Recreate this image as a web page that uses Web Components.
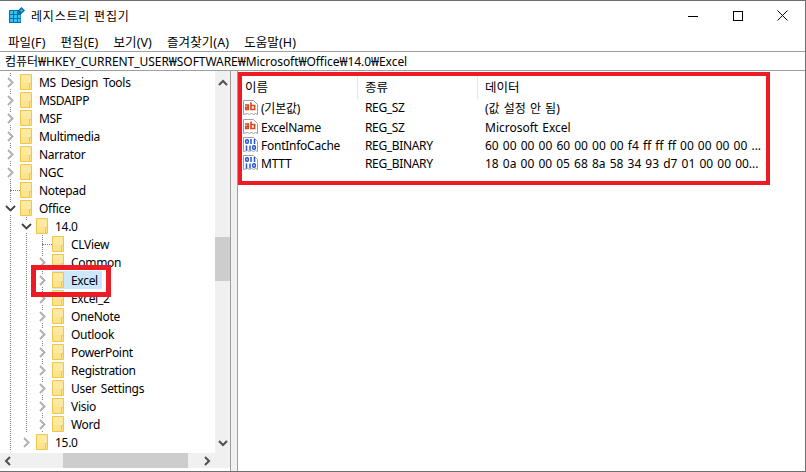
<!DOCTYPE html>
<html>
<head>
<meta charset="utf-8">
<style>
  html, body { margin: 0; padding: 0; background: #fff; }
  body { font-family: "Noto Sans", "Noto Sans CJK KR", sans-serif; font-size: 12px; color: #000; }
</style>
</head>
<body>
<reg-window>
  <reg-titlebar slot="title">레지스트리 편집기</reg-titlebar>
  <reg-menu slot="menu"></reg-menu>
  <reg-address slot="address">컴퓨터₩HKEY_CURRENT_USER₩SOFTWARE₩Microsoft₩Office₩14.0₩Excel</reg-address>
  <reg-tree slot="tree">
    <tree-row level="0" arrow="right" guides="10">MS Design Tools</tree-row>
    <tree-row level="0" arrow="right" guides="10">MSDAIPP</tree-row>
    <tree-row level="0" arrow="right" guides="10">MSF</tree-row>
    <tree-row level="0" arrow="right" guides="10">Multimedia</tree-row>
    <tree-row level="0" arrow="right" guides="10">Narrator</tree-row>
    <tree-row level="0" arrow="right" guides="10">NGC</tree-row>
    <tree-row level="0" arrow="dots" guides="10">Notepad</tree-row>
    <tree-row level="0" arrow="down" guides="10">Office</tree-row>
    <tree-row level="1" arrow="down" guides="10,26">14.0</tree-row>
    <tree-row level="2" arrow="dots" guides="10,26,42">CLView</tree-row>
    <tree-row level="2" arrow="right" guides="10,26,42">Common</tree-row>
    <tree-row level="2" arrow="right" guides="10,26,42" selected>Excel</tree-row>
    <tree-row level="2" arrow="right" guides="10,26,42">Excel_2</tree-row>
    <tree-row level="2" arrow="right" guides="10,26,42">OneNote</tree-row>
    <tree-row level="2" arrow="right" guides="10,26,42">Outlook</tree-row>
    <tree-row level="2" arrow="right" guides="10,26,42">PowerPoint</tree-row>
    <tree-row level="2" arrow="right" guides="10,26,42">Registration</tree-row>
    <tree-row level="2" arrow="right" guides="10,26,42">User Settings</tree-row>
    <tree-row level="2" arrow="right" guides="10,26,42">Visio</tree-row>
    <tree-row level="2" arrow="right" guides="10,26,42">Word</tree-row>
    <tree-row level="1" arrow="right" guides="10">15.0</tree-row>
  </reg-tree>
  <reg-list slot="list">
    <list-row kind="sz" name="(기본값)" type="REG_SZ" data="(값 설정 안 됨)"></list-row>
    <list-row kind="sz" name="ExcelName" type="REG_SZ" data="Microsoft Excel"></list-row>
    <list-row kind="bin" name="FontInfoCache" type="REG_BINARY" data="60 00 00 00 60 00 00 00 f4 ff ff ff 00 00 00 00 ..."></list-row>
    <list-row kind="bin" name="MTTT" type="REG_BINARY" data="18 0a 00 00 05 68 8a 58 34 93 d7 01 00 00 00..."></list-row>
  </reg-list>
</reg-window>

<script>
// Small helper, every element just stamps its markup into an open shadow root
class ShadowEl extends HTMLElement {
  constructor() {
    super();
    this.attachShadow({ mode: 'open' });
  }
}

class RegWindow extends ShadowEl {
  connectedCallback() {
    this.shadowRoot.innerHTML = `
      <style>
        :host {
          display: flex;
          flex-direction: column;
          position: relative;
          width: 806px;
          height: 472px;
          box-sizing: border-box;
          border: 1px solid #707070;
          border-left: 0;
          background: #fff;
          overflow: hidden;
        }
        .main { flex: 1; display: flex; min-height: 0; }
        .mark { position: absolute; border: 4px solid #ed1c24; box-sizing: border-box; pointer-events: none; }
        .mark.list { left: 238px; top: 71px; width: 532px; height: 113px; }
        .mark.key { left: 31px; top: 264px; width: 80px; height: 32px; border-width: 5px; }
      </style>
      <slot name="title"></slot>
      <slot name="menu"></slot>
      <slot name="address"></slot>
      <div class="main">
        <slot name="tree"></slot>
        <slot name="list"></slot>
      </div>
      <div class="mark list"></div>
      <div class="mark key"></div>
    `;
  }
}

class RegTitlebar extends ShadowEl {
  connectedCallback() {
    this.shadowRoot.innerHTML = `
      <style>
        :host { display: flex; align-items: center; height: 30px; padding-left: 9px; font-size: 12px; }
        svg { display: block; }
        .icon { margin-top: -2px; }
        .text { margin-left: 6px; flex: 1; letter-spacing: 0.8px; margin-top: -1px; }
        .btn { width: 45px; height: 30px; display: flex; align-items: center; justify-content: center; margin-top: -1px; }
      </style>
      <svg class="icon" width="16" height="16" viewBox="0 0 16 16">
        <path fill="#0b6fa8" d="M0 3h12v13H0z"/>
        <path fill="#35c2f5" d="M1 4h3v3H1zM5 4h3v3H5zM1 8h3v3H1zM5 8h3v3H5zM9 8h2.500v3H9zM1 12h3v3H1zM5 12h3v3H5zM9 12h2.500v3H9z"/>
        <path fill="#0b6fa8" d="M12.500 0l3.500 3.500-3.500 3.500L9 3.500z"/>
        <path fill="#35c2f5" d="M12.500 2l1.500 1.500-1.500 1.500L11 3.500z"/>
      </svg>
      <span class="text"><slot></slot></span>
      <span class="btn"><svg width="10" height="10"><path d="M0 5.500h10" stroke="#000"/></svg></span>
      <span class="btn"><svg width="10" height="10"><rect x=".5" y=".5" width="9" height="9" fill="none" stroke="#000"/></svg></span>
      <span class="btn"><svg width="11" height="11"><path d="M.5.500l10 10M10.500.500l-10 10" stroke="#000" stroke-width="1"/></svg></span>
    `;
  }
}

class RegMenu extends ShadowEl {
  connectedCallback() {
    const items = ['파일(F)', '편집(E)', '보기(V)', '즐겨찾기(A)', '도움말(H)'];
    this.shadowRoot.innerHTML = `
      <style>
        :host { display: flex; height: 20px; align-items: center; padding-left: 8px; gap: 15px; font-size: 12.500px; letter-spacing: 0.1px; }
      </style>
      ${items.map(t => `<span>${t}</span>`).join('')}
    `;
  }
}

class RegAddress extends ShadowEl {
  connectedCallback() {
    this.shadowRoot.innerHTML = `
      <style>
        :host {
          display: flex;
          align-items: center;
          height: 20px;
          box-sizing: border-box;
          border: 1px solid #a0a0a0;
          border-left: 0;
          border-right: 0;
          padding-left: 5px;
          font-size: 12px;
          letter-spacing: -0.05px;
          white-space: nowrap;
        }
      </style>
      <slot></slot>
    `;
  }
}

class RegTree extends ShadowEl {
  connectedCallback() {
    this.shadowRoot.innerHTML = `
      <style>
        :host {
          display: flex;
          width: 238px;
          flex: none;
          height: 100%;
          box-sizing: border-box;
          border-right: 1px solid #a0a0a0;
          background: #fff;
        }
        .pane {
          width: 230px;
          flex: none;
          display: grid;
          grid-template-columns: 215px 15px;
          grid-template-rows: 1fr 15px;
          padding-bottom: 3px;
          box-sizing: border-box;
          background: #fff;
        }
        .split { flex: 1; background: #f0f0f0; border-left: 1px solid #a0a0a0; }
        .rows { background: #fff; overflow: hidden; padding-top: 2px; }
        svg { display: block; }
        .vbar, .hbar, .corner { background: #f0f0f0; }
        .vbar { display: flex; flex-direction: column; align-items: center; padding: 3px 0 1px; }
        .thumb-v { margin-top: 146px; margin-bottom: auto; width: 15px; height: 44px; background: #cdcdcd; flex: none; }
        .hbar { display: flex; align-items: center; }
        .thumb-h { width: 125px; height: 15px; background: #cdcdcd; margin-left: 48px; margin-right: auto; }
        .up, .down { height: 17px; display: flex; align-items: center; flex: none; }
        .end { width: 15px; display: flex; justify-content: center; flex: none; }
      </style>
      <div class="pane">
        <div class="rows"><slot></slot></div>
        <div class="vbar">
          <span class="up"><svg width="10" height="7"><path d="M1 6l4-4 4 4" fill="none" stroke="#505050" stroke-width="2"/></svg></span>
          <div class="thumb-v"></div>
          <span class="down"><svg width="10" height="7"><path d="M1 1l4 4 4-4" fill="none" stroke="#505050" stroke-width="2"/></svg></span>
        </div>
        <div class="hbar">
          <span class="end"><svg width="7" height="10"><path d="M6 1L2 5l4 4" fill="none" stroke="#505050" stroke-width="2"/></svg></span>
          <div class="thumb-h"></div>
          <span class="end"><svg width="7" height="10"><path d="M1 1l4 4-4 4" fill="none" stroke="#505050" stroke-width="2"/></svg></span>
        </div>
        <div class="corner"></div>
      </div>
      <div class="split"></div>
    `;
  }
}

class TreeRow extends ShadowEl {
  connectedCallback() {
    const level = parseInt(this.getAttribute('level'), 10);
    const arrow = this.getAttribute('arrow');
    const guides = (this.getAttribute('guides') || '').split(',').filter(Boolean);
    const dots = 'repeating-linear-gradient(#808080 0 1px, transparent 1px 2px)';
    const bg = guides.map(x => `${dots} ${x}px 0 / 1px 100% no-repeat`).join(',');
    const arrows = {
      right: '<svg width="7" height="11"><path d="M1 1l4.500 4.500L1 10" fill="none" stroke="#b0b0b0" stroke-width="2"/></svg>',
      down: '<svg width="11" height="7"><path d="M1 1l4.500 4.500L10 1" fill="none" stroke="#404040" stroke-width="1.800"/></svg>'
    };
    this.shadowRoot.innerHTML = `
      <style>
        :host { display: block; height: 18px; background: ${bg}; letter-spacing: -0.3px; word-spacing: 2px; }
        .row { display: flex; align-items: center; height: 18px; padding-left: ${level * 16}px; white-space: nowrap; }
        .arrow { width: 20px; height: 18px; flex: none; display: flex; align-items: center; justify-content: center; }
        .arrow.solid { background: #fff; background-clip: content-box; padding: 3px 4px; box-sizing: border-box; }
        .dots { width: 10px; margin-left: 10px; border-top: 1px dotted #808080; }
        .item { display: flex; align-items: center; height: 18px; }
        .sel { background: #cce8ff; }
        svg { display: block; flex: none; }
        .label { margin-left: 7px; padding-right: 4px; }
      </style>
      <div class="row">
        <span class="arrow ${arrow === 'dots' ? '' : 'solid'}">${arrow === 'dots' ? '<span class="dots"></span>' : arrows[arrow]}</span>
        <span class="item ${this.hasAttribute('selected') ? 'sel' : ''}">
          <svg width="12" height="16" viewBox="0 0 12 16">
            <path d="M.5.500h11v15H.5z" fill="#fde48c" stroke="#eec64e"/>
            <path d="M1 1h10v8H1z" fill="#fff0bd" opacity=".45"/>
            <path d="M9.500 15.500v-6h2" fill="none" stroke="#eec64e"/>
          </svg>
          <span class="label"><slot></slot></span>
        </span>
      </div>
    `;
  }
}

class RegList extends ShadowEl {
  connectedCallback() {
    this.shadowRoot.innerHTML = `
      <style>
        :host { display: block; flex: 1; min-width: 0; background: #fff; }
        .head { display: grid; grid-template-columns: 120px 120px 1fr; height: 26px; margin-top: 2px; }
        .head span { display: flex; align-items: center; padding-left: 7px; border-right: 1px solid #e5e5e5; font-size: 12.500px; }
        .head span:last-child { border-right: 0; }
      </style>
      <div class="head"><span>이름</span><span>종류</span><span>데이터</span></div>
      <slot></slot>
    `;
  }
}

class ListRow extends ShadowEl {
  connectedCallback() {
    const sz = this.getAttribute('kind') === 'sz';
    const glyph = sz
      ? '<g fill="none" stroke="#d9481f" stroke-width="1.700"><path d="M2 5h3.200v4.500H2.800V7.300h2.400"/><path d="M8 2.500v7h3.600V5.500H8"/></g>'
      : '<g fill="none" stroke="#2a55d6" stroke-width="1.500"><rect x="2.700" y="2.700" width="2.600" height="3.600" rx="1"/><path d="M8 2v5M11.500 2v5M3.500 8.500v5M7 8.500v5"/><rect x="9.700" y="8.700" width="2.600" height="3.600" rx="1"/></g>';
    this.shadowRoot.innerHTML = `
      <style>
        :host { display: grid; grid-template-columns: 120px 120px 1fr; height: 18px; align-items: center; white-space: nowrap; }
        :host(:first-child) { height: 19px; align-items: start; }
        .name { display: flex; align-items: center; padding-left: 5px; gap: 2px; letter-spacing: -0.25px; }
        .type, .data { padding-left: 7px; }
        .type { letter-spacing: -0.35px; }
        .data { word-spacing: 1px; }
        svg { display: block; flex: none; }
      </style>
      <span class="name">
        <svg width="16" height="16" viewBox="0 0 16 16">
          <path d="M.5.500h10l4 4v10l-2-1-2 1-2-1-2 1-2-1-4 1z" fill="#fff" stroke="#a0a0a0"/>
          ${glyph}
        </svg>
        ${this.getAttribute('name')}
      </span>
      <span class="type">${this.getAttribute('type')}</span>
      <span class="data">${this.getAttribute('data')}</span>
    `;
  }
}

customElements.define('reg-window', RegWindow);
customElements.define('reg-titlebar', RegTitlebar);
customElements.define('reg-menu', RegMenu);
customElements.define('reg-address', RegAddress);
customElements.define('reg-tree', RegTree);
customElements.define('tree-row', TreeRow);
customElements.define('reg-list', RegList);
customElements.define('list-row', ListRow);
</script>
</body>
</html>
